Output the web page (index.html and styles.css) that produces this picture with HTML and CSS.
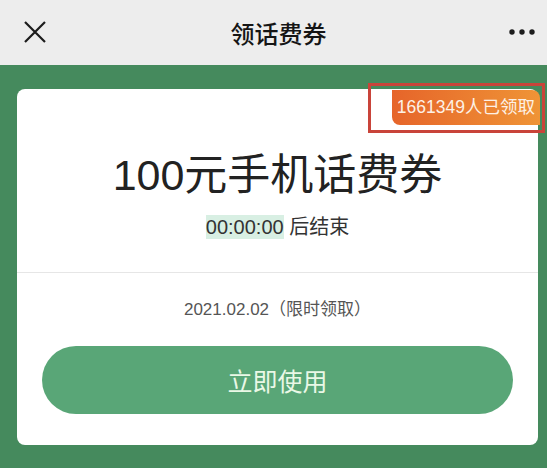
FILE: index.html
```html
<!DOCTYPE HTML>
<html>

<head>
    <title>领话费券</title>
    <meta name="viewport" content="width=device-width, initial-scale=1">
    <meta charset="utf-8">
    <link rel="stylesheet" href="styles.css">
</head>

<body>
    <div class="topnav">
        <svg class="close" width="22" height="22" viewBox="0 0 22 22">
            <path d="M1 1 L21 21 M21 1 L1 21" stroke="#1c1c1c" stroke-width="2.2" fill="none" />
        </svg>
        <h1>领话费券</h1>
        <svg class="more" width="26" height="8" viewBox="0 0 26 8">
            <circle cx="3" cy="4" r="2.7" fill="#1c1c1c" />
            <circle cx="13" cy="4" r="2.7" fill="#1c1c1c" />
            <circle cx="23" cy="4" r="2.7" fill="#1c1c1c" />
        </svg>
    </div>
    <div class="content">
        <div class="card">
            <div class="badge">1661349人已领取</div>
            <div class="mark"></div>
            <div class="top">
                <h2>100元手机话费券</h2>
                <p class="timer"><span class="time">00:00:00</span> 后结束</p>
            </div>
            <div class="bottom">
                <p class="date">2021.02.02（限时领取）</p>
                <button class="button">立即使用</button>
            </div>
        </div>
    </div>
</body>

</html>
```

FILE: styles.css
```css
html {
    font-family: "Liberation Sans", "Noto Sans CJK SC", sans-serif;
    text-align: center;
}

body {
    margin: 0;
    width: 547px;
    height: 468px;
    overflow: hidden;
    background-color: #458a5d;
}

.topnav {
    height: 65px;
    background-color: #ededed;
    display: flex;
    align-items: center;
    justify-content: space-between;
    padding: 0 12px 0 24px;
}

.topnav h1 {
    margin: 0 0 0 2px;
    font-size: 24px;
    font-weight: 500;
    color: #151515;
}

.close {
    display: block;
    margin-top: -2px;
}

.more {
    display: block;
    margin-top: -2px;
}

.content {
    padding: 24px 9px 0 17px;
}

.card {
    position: relative;
    background-color: #fff;
    border-radius: 8px;
    height: 356px;
    box-sizing: border-box;
}

.badge {
    position: absolute;
    top: 1px;
    right: -2px;
    height: 35px;
    line-height: 35px;
    padding: 0 5px;
    background: linear-gradient(90deg, #e6652a, #ef9436);
    color: #fdf1e6;
    font-size: 17.5px;
    border-radius: 0 8px 0 8px;
}

.mark {
    position: absolute;
    top: -6px;
    right: -7px;
    width: 171px;
    height: 44px;
    border: 3px solid #c9443a;
}

.top {
    padding-top: 61px;
    padding-bottom: 33px;
    border-bottom: 1px solid #e6e6e6;
}

h2 {
    margin: 0;
    font-size: 43px;
    line-height: 50px;
    font-weight: normal;
    color: #222;
}

.timer {
    margin: 15px 0 0;
    font-size: 20px;
    line-height: 24px;
    color: #333;
}

.time {
    background-color: #d8efe3;
    padding: 1px 0;
}

.bottom {
    padding: 25px 25px 0;
}

.date {
    margin: 0;
    font-size: 17px;
    line-height: 24px;
    color: #555;
}

.button {
    display: block;
    width: 100%;
    height: 68px;
    margin-top: 24px;
    border: none;
    border-radius: 34px;
    background-color: #59a677;
    color: #eaf8e6;
    font-family: "Liberation Sans", "Noto Sans CJK SC", sans-serif;
    font-size: 25px;
    outline: none;
}
```
